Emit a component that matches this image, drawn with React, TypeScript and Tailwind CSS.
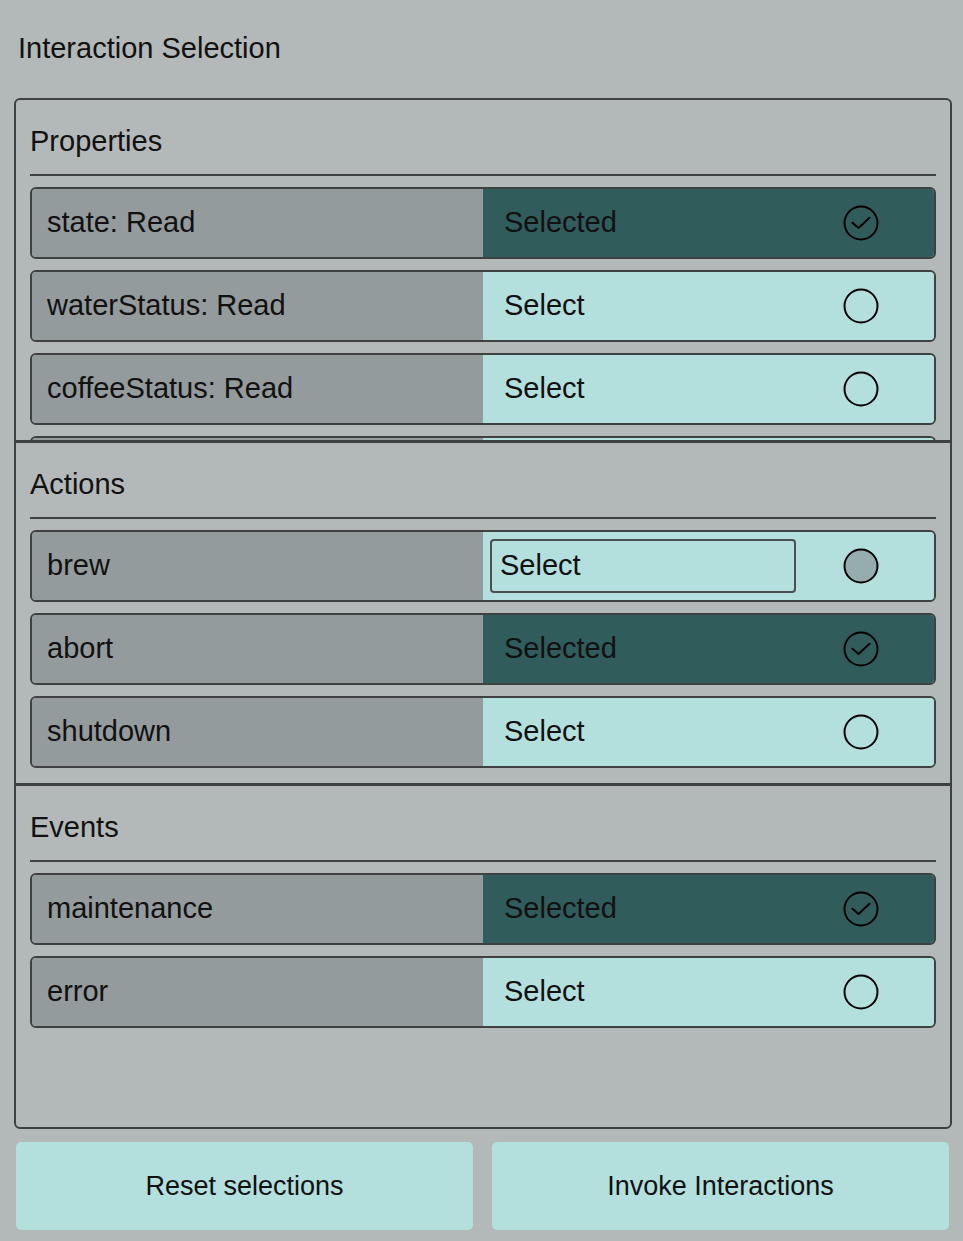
type Item = {label: string; selected: boolean; hover?: boolean};

const properties: Item[] = [
    {label: "state: Read", selected: true},
    {label: "waterStatus: Read", selected: false},
    {label: "coffeeStatus: Read", selected: false},
    {label: "maintenanceNeeded: Read", selected: false},
];

const actions: Item[] = [
    {label: "brew", selected: false, hover: true},
    {label: "abort", selected: true},
    {label: "shutdown", selected: false},
];

const events: Item[] = [
    {label: "maintenance", selected: true},
    {label: "error", selected: false},
];

function CheckIcon({selected, hover}: {selected: boolean; hover?: boolean}) {
    return (
        <svg width="36" height="36" viewBox="0 0 36 36" className="shrink-0">
            <circle cx="18" cy="18" r="16.5" fill={hover ? "#95adad" : "none"} stroke="#000" strokeWidth="2"/>
            {selected && (
                <polyline points="9.5,17.7 15.5,23 26.5,12.7" fill="none" stroke="#000" strokeWidth="2"
                          strokeLinecap="round" strokeLinejoin="round"/>
            )}
        </svg>
    );
}

function Row({item}: {item: Item}) {
    return (
        <div className="flex h-[72px] shrink-0 overflow-hidden rounded-[6px] border-2 border-[#3d4141]">
            <div className="flex w-[451px] items-center bg-[#939b9c] pl-[15px] text-[29px] text-[#111]">
                {item.label}
            </div>
            <div
                className={`flex flex-1 items-center pr-[55px] text-[29px] text-[#111] ${item.selected ? "bg-[#305c5b]" : "bg-[#b3dfdd]"}`}>
                {item.hover ? (
                    <div
                        className="ml-[7px] flex h-[54px] w-[306px] items-center rounded-[4px] border-2 border-[#4a5050] pl-[8px]">
                        Select
                    </div>
                ) : (
                    <span className="pl-[21px]">{item.selected ? "Selected" : "Select"}</span>
                )}
                <div className="ml-auto">
                    <CheckIcon selected={item.selected} hover={item.hover}/>
                </div>
            </div>
        </div>
    );
}

function Section({title, items, last}: {title: string; items: Item[]; last?: boolean}) {
    return (
        <div
            className={`flex flex-col overflow-hidden px-[14px] ${last ? "flex-1" : "h-[343px] shrink-0 border-b-[3px] border-[#3d4141]"}`}>
            <h2 className="pt-[24px] text-[29px] leading-[34px] text-[#111]">{title}</h2>
            <div className="mt-[16px] h-[2px] shrink-0 bg-[#3d4141]"/>
            <div className="mt-[11px] flex flex-col gap-[11px]">
                {items.map((item) => (
                    <Row key={item.label} item={item}/>
                ))}
            </div>
        </div>
    );
}

export default function App() {
    return (
        <div className="h-[1241px] bg-[#b3b9b8] font-['Liberation_Sans',Arial,sans-serif]">
            <div className="flex h-[98px] items-center pl-[18px] text-[29px] text-[#111]">
                Interaction Selection
            </div>
            <div className="mx-[14px] flex h-[1031px] w-[938px] flex-col overflow-hidden rounded-[6px] border-2 border-[#3d4141]">
                <Section title="Properties" items={properties}/>
                <Section title="Actions" items={actions}/>
                <Section title="Events" items={events} last/>
            </div>
            <div className="mt-[13px] flex gap-[19px] pl-[16px]">
                <button className="flex h-[88px] w-[457px] items-center justify-center rounded-[5px] bg-[#b3dfdd] text-[27px] text-[#111]">
                    Reset selections
                </button>
                <button className="flex h-[88px] w-[457px] items-center justify-center rounded-[5px] bg-[#b3dfdd] text-[27px] text-[#111]">
                    Invoke Interactions
                </button>
            </div>
        </div>
    );
}
